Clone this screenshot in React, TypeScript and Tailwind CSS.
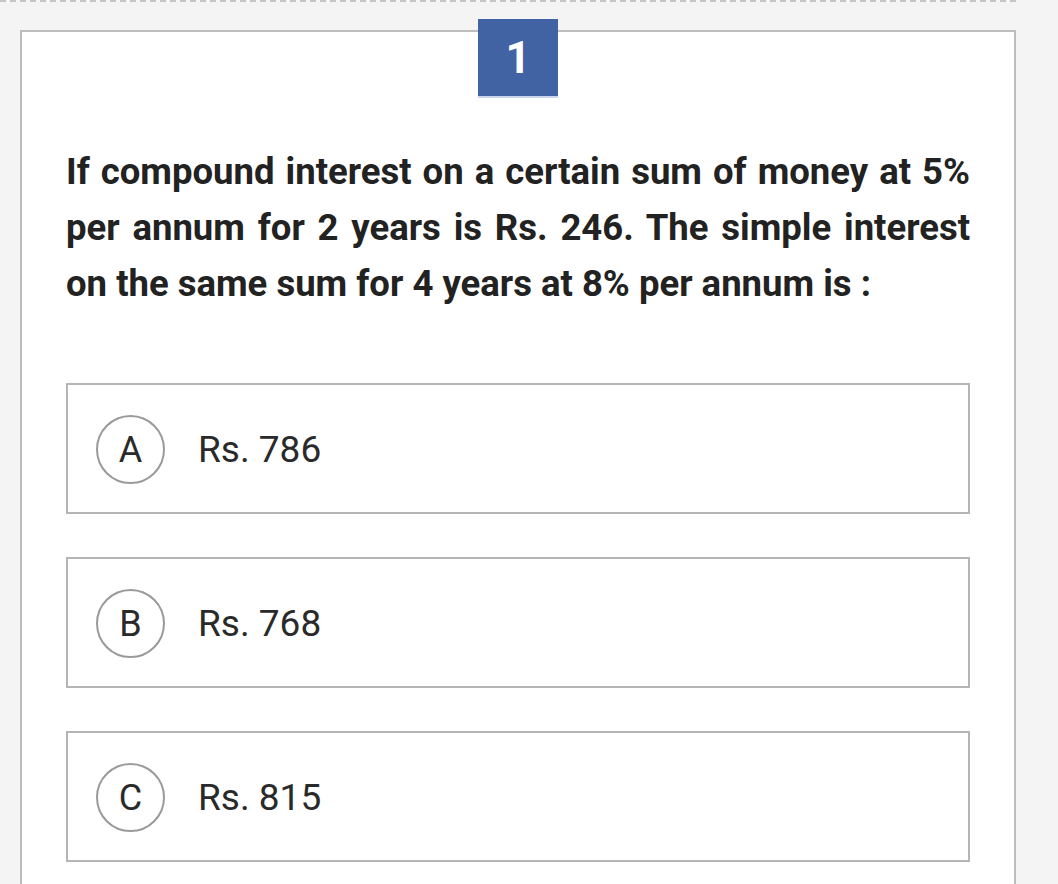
import React from "react";

const options = [
  { key: "A", text: "Rs. 786" },
  { key: "B", text: "Rs. 768" },
  { key: "C", text: "Rs. 815" },
];

export default function App() {
  return (
    <div className="min-h-[884px] bg-[#f4f4f4] font-['Roboto',sans-serif] overflow-hidden">
      {/* dashed separator */}
      <div className="w-[1016px] border-t-2 border-dashed border-[#c4c4c4]" />

      {/* question card */}
      <div className="relative ml-[20px] mt-[28px] w-[996px] border-2 border-[#bdbdbd] bg-white px-[44px] pt-[112px] pb-[60px]">
        <div className="absolute left-1/2 top-[-13px] -translate-x-1/2 w-[80px] h-[79px] bg-[#4263a3] border-b-2 border-[#c9d6ee] flex items-center justify-center">
          <span className="text-white text-[44px] font-bold leading-none">1</span>
        </div>

        <p className="text-[36.5px] leading-[56px] font-bold text-[#222] text-justify">
          If compound interest on a certain sum of money at 5% per annum for 2 years is Rs. 246. The simple interest on the same sum for 4 years at 8% per annum is :
        </p>

        <div className="mt-[71px] flex flex-col gap-[43px]">
          {options.map((o) => (
            <div key={o.key} className="h-[131px] border-2 border-[#b5b5b5] flex items-center pl-[28px] pt-[2px]">
              <div className="w-[69px] h-[69px] rounded-full border-2 border-[#9a9a9a] flex items-center justify-center text-[36px] text-[#2a2a2a]">
                {o.key}
              </div>
              <span className="ml-[33px] text-[37px] text-[#2a2a2a]">{o.text}</span>
            </div>
          ))}
        </div>
      </div>
    </div>
  );
}
